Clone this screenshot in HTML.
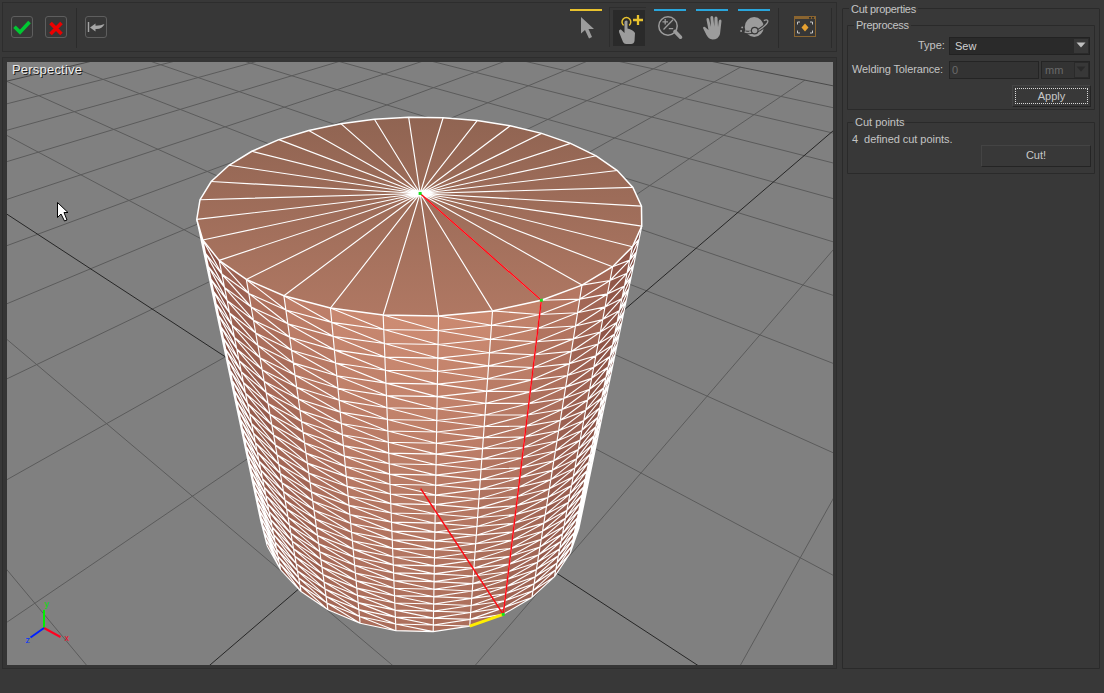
<!DOCTYPE html>
<html><head><meta charset="utf-8">
<style>
*{margin:0;padding:0;box-sizing:border-box}
html,body{width:1104px;height:693px;overflow:hidden;background:#383838;font-family:"Liberation Sans",sans-serif;}
.abs{position:absolute}
.panel{position:absolute;border:1px solid #2d2d2d;}
.t{position:absolute;color:#c4c4c4;font-size:11px;white-space:nowrap;line-height:13px;letter-spacing:0}
.btn{position:absolute;border:1px solid #5e5e5e;border-radius:3px}
</style></head><body>
<div class="panel" style="left:2px;top:2px;width:835px;height:50px;background:#373737"></div>
<div class="panel" style="left:2px;top:57px;width:835px;height:612px;background:#353535"></div>
<div class="btn" style="left:11px;top:16px;width:22px;height:22px"></div>
<div class="btn" style="left:45px;top:16px;width:22px;height:22px"></div>
<div class="btn" style="left:85px;top:16px;width:22px;height:22px"></div>
<div class="abs" style="left:76px;top:8px;width:1px;height:40px;background:#2b2b2b"></div>
<div class="abs" style="left:609px;top:7px;width:37px;height:1px;background:#2e2e2e"></div>
<div class="abs" style="left:609px;top:7px;width:1px;height:40px;background:#2e2e2e"></div>
<div class="abs" style="left:613px;top:10px;width:32px;height:36px;background:#2a2a2a"></div>
<div class="abs" style="left:778px;top:8px;width:1px;height:40px;background:#2b2b2b"></div>
<div class="abs" style="left:831px;top:8px;width:1px;height:40px;background:#2b2b2b"></div>
<div class="abs" style="left:570px;top:9px;width:32px;height:2px;background:#e8c22e"></div>
<div class="abs" style="left:654px;top:9px;width:32px;height:2px;background:#2aa6dc"></div>
<div class="abs" style="left:696px;top:9px;width:32px;height:2px;background:#2aa6dc"></div>
<div class="abs" style="left:738px;top:9px;width:32px;height:2px;background:#2aa6dc"></div>
<svg class="abs" style="left:0;top:0" width="1104" height="693" viewBox="0 0 1104 693">
<defs>
<clipPath id="vp"><rect x="7" y="62" width="826" height="603"/></clipPath>
<linearGradient id="topg" x1="0" y1="117" x2="0" y2="317" gradientUnits="userSpaceOnUse">
<stop offset="0" stop-color="#906452"/><stop offset="1" stop-color="#b07863"/>
</linearGradient>
</defs>
<rect x="7" y="62" width="826" height="603" fill="#808080"/>
<g clip-path="url(#vp)">
<defs><linearGradient id="sg10" gradientUnits="userSpaceOnUse" x1="637.09" y1="236.42" x2="574.53" y2="540.94"><stop offset="0" stop-color="#7d463c"/><stop offset="0.5" stop-color="#7c453b"/><stop offset="1" stop-color="#7a433a"/></linearGradient><linearGradient id="sg11" gradientUnits="userSpaceOnUse" x1="622.5" y1="256.73" x2="562.34" y2="564.92"><stop offset="0" stop-color="#915749"/><stop offset="0.5" stop-color="#8c5346"/><stop offset="1" stop-color="#884f43"/></linearGradient><linearGradient id="sg12" gradientUnits="userSpaceOnUse" x1="597.28" y1="275.92" x2="543.21" y2="587.03"><stop offset="0" stop-color="#a46856"/><stop offset="0.5" stop-color="#9b6051"/><stop offset="1" stop-color="#945a4c"/></linearGradient><linearGradient id="sg13" gradientUnits="userSpaceOnUse" x1="561.66" y1="292.66" x2="517.58" y2="605.9"><stop offset="0" stop-color="#b57762"/><stop offset="0.5" stop-color="#a86c5a"/><stop offset="1" stop-color="#9e6353"/></linearGradient><linearGradient id="sg14" gradientUnits="userSpaceOnUse" x1="516.94" y1="305.58" x2="486.48" y2="620.21"><stop offset="0" stop-color="#c2836b"/><stop offset="0.5" stop-color="#b27561"/><stop offset="1" stop-color="#a66a58"/></linearGradient><linearGradient id="sg15" gradientUnits="userSpaceOnUse" x1="465.54" y1="313.47" x2="451.46" y2="628.88"><stop offset="0" stop-color="#cb8a71"/><stop offset="0.5" stop-color="#b97a65"/><stop offset="1" stop-color="#ab6e5b"/></linearGradient><linearGradient id="sg16" gradientUnits="userSpaceOnUse" x1="410.85" y1="315.53" x2="414.56" y2="631.19"><stop offset="0" stop-color="#cd8c73"/><stop offset="0.5" stop-color="#ba7c66"/><stop offset="1" stop-color="#ac6f5c"/></linearGradient><linearGradient id="sg17" gradientUnits="userSpaceOnUse" x1="356.79" y1="311.56" x2="378.01" y2="626.95"><stop offset="0" stop-color="#c88870"/><stop offset="0.5" stop-color="#b77964"/><stop offset="1" stop-color="#aa6d5b"/></linearGradient><linearGradient id="sg18" gradientUnits="userSpaceOnUse" x1="307.16" y1="301.94" x2="344.02" y2="616.51"><stop offset="0" stop-color="#be7f69"/><stop offset="0.5" stop-color="#af725f"/><stop offset="1" stop-color="#a46857"/></linearGradient><linearGradient id="sg19" gradientUnits="userSpaceOnUse" x1="265.1" y1="287.63" x2="314.5" y2="600.7"><stop offset="0" stop-color="#af725e"/><stop offset="0.5" stop-color="#a46857"/><stop offset="1" stop-color="#9b6050"/></linearGradient><linearGradient id="sg20" gradientUnits="userSpaceOnUse" x1="232.72" y1="269.91" x2="290.85" y2="580.7"><stop offset="0" stop-color="#9d6252"/><stop offset="0.5" stop-color="#965c4d"/><stop offset="1" stop-color="#905649"/></linearGradient><linearGradient id="sg21" gradientUnits="userSpaceOnUse" x1="210.96" y1="250.16" x2="273.92" y2="557.86"><stop offset="0" stop-color="#8a5145"/><stop offset="0.5" stop-color="#864e42"/><stop offset="1" stop-color="#834b40"/></linearGradient><linearGradient id="sg22" gradientUnits="userSpaceOnUse" x1="199.77" y1="229.69" x2="263.99" y2="533.54"><stop offset="0" stop-color="#764037"/><stop offset="0.5" stop-color="#764037"/><stop offset="1" stop-color="#753f37"/></linearGradient></defs>
<path d="M25968.91,15684.53L2065.74,333.87M-26273.07,15517.67L-1824.31,512.1M21178,15669.23L1848.87,290.23M-20722.23,15535.4L-1457.93,425.88M16387.09,15653.93L1664.13,253.05M-15171.38,15553.13L-1170.13,358.15M11596.18,15638.63L1504.87,221M-9620.54,15570.86L-938.08,303.54M6805.26,15623.33L1366.16,193.09M-4069.7,15588.59L-747.01,258.57M2014.35,15608.02L1244.27,168.56M1481.14,15606.32L-586.96,220.9M-2776.56,15592.72L1136.3,146.83M7031.99,15624.05L-450.92,188.89M-7567.47,15577.42L1040.01,127.46M12582.83,15641.78L-333.88,161.34M-12358.39,15562.12L953.59,110.07M18133.67,15659.51L-232.12,137.39M-21940.21,15531.51L804.88,80.14M29235.36,15694.97L-63.83,97.79M-26731.12,15516.21L740.43,67.17M10594.6,4839.96L6.54,81.23M-31522.04,15500.91L681.47,55.31M6051.78,2393.44L69.62,66.38M-9816.26,4409.88L627.33,44.41M4475.82,1544.72L126.5,53M-5875.84,2424.22L577.43,34.37M3675.74,1113.84L178.04,40.87M-4303.85,1632.07L531.29,25.09M3191.75,853.19L224.97,29.82M-3458.37,1206.02L488.52,16.48M2867.43,678.53L267.87,19.73M-2930.3,939.91L448.74,8.47M2634.95,553.33L307.24,10.46M-2569.15,757.92L411.66,1.01M2460.15,459.19L343.5,1.92" stroke="#5b5b5b" stroke-width="1" fill="none"/>
<path d="M30759.83,15699.84L2323.92,385.82M-31823.91,15499.95L-2306.57,625.6M-2306.57,625.6L377.01,-5.96M2323.92,385.82L377.01,-5.96" stroke="#4a4a4a" stroke-width="1" fill="none"/>
<path d="M-17149.3,15546.82L875.61,94.37M23684.51,15677.24L-142.82,116.38" stroke="#1c1c1c" stroke-width="0.9" fill="none"/>
<polygon points="641.75,226.14 632.42,246.7 570.19,553.23 578.86,528.65" fill="url(#sg10)"/>
<polygon points="632.42,246.7 612.58,266.76 554.49,576.61 570.19,553.23" fill="url(#sg11)"/>
<polygon points="612.58,266.76 581.98,285.08 531.93,597.45 554.49,576.61" fill="url(#sg12)"/>
<polygon points="581.98,285.08 541.35,300.24 503.24,614.35 531.93,597.45" fill="url(#sg13)"/>
<polygon points="541.35,300.24 492.53,310.91 469.72,626.08 503.24,614.35" fill="url(#sg14)"/>
<polygon points="492.53,310.91 438.54,316.02 433.21,631.68 469.72,626.08" fill="url(#sg15)"/>
<polygon points="438.54,316.02 383.16,315.04 395.91,630.69 433.21,631.68" fill="url(#sg16)"/>
<polygon points="383.16,315.04 330.41,308.07 360.11,623.2 395.91,630.69" fill="url(#sg17)"/>
<polygon points="330.41,308.07 283.9,295.81 327.93,609.81 360.11,623.2" fill="url(#sg18)"/>
<polygon points="283.9,295.81 246.3,279.45 301.06,591.58 327.93,609.81" fill="url(#sg19)"/>
<polygon points="246.3,279.45 219.13,260.37 280.63,569.82 301.06,591.58" fill="url(#sg20)"/>
<polygon points="219.13,260.37 202.78,239.96 267.2,545.91 280.63,569.82" fill="url(#sg21)"/>
<polygon points="202.78,239.96 196.76,219.41 260.78,521.18 267.2,545.91" fill="url(#sg22)"/>
<path d="M641.75,226.14L578.86,528.65M632.42,246.7L570.19,553.23M612.58,266.76L554.49,576.61M581.98,285.08L531.93,597.45M541.35,300.24L503.24,614.35M492.53,310.91L469.72,626.08M438.54,316.02L433.21,631.68M383.16,315.04L395.91,630.69M330.41,308.07L360.11,623.2M283.9,295.81L327.93,609.81M246.3,279.45L301.06,591.58M219.13,260.37L280.63,569.82M202.78,239.96L267.2,545.91M196.76,219.41L260.78,521.18M639.03,239.23L629.69,260.13M632.42,246.7L639.03,239.23M636.38,251.99L627.04,273.21M629.69,260.13L636.38,251.99M633.79,264.44L624.45,285.97M627.04,273.21L633.79,264.44M631.26,276.6L621.92,298.41M624.45,285.97L631.26,276.6M628.79,288.47L619.46,310.54M621.92,298.41L628.79,288.47M626.38,300.07L617.06,322.37M619.46,310.54L626.38,300.07M624.03,311.39L614.71,333.92M617.06,322.37L624.03,311.39M621.73,322.46L612.42,345.2M614.71,333.92L621.73,322.46M619.48,333.28L610.19,356.21M612.42,345.2L619.48,333.28M617.28,343.86L608.01,366.96M610.19,356.21L617.28,343.86M615.13,354.2L605.87,377.47M608.01,366.96L615.13,354.2M613.02,364.32L603.79,387.74M605.87,377.47L613.02,364.32M610.97,374.22L601.75,397.78M603.79,387.74L610.97,374.22M608.95,383.91L599.76,407.6M601.75,397.78L608.95,383.91M606.98,393.39L597.81,417.2M599.76,407.6L606.98,393.39M605.05,402.68L595.9,426.59M597.81,417.2L605.05,402.68M603.16,411.77L594.04,435.78M595.9,426.59L603.16,411.77M601.31,420.68L592.21,444.77M594.04,435.78L601.31,420.68M599.49,429.41L590.42,453.58M592.21,444.77L599.49,429.41M597.71,437.96L588.67,462.2M590.42,453.58L597.71,437.96M595.97,446.35L586.96,470.65M588.67,462.2L595.97,446.35M594.26,454.56L585.28,478.92M586.96,470.65L594.26,454.56M592.59,462.62L583.63,487.02M585.28,478.92L592.59,462.62M590.95,470.52L582.02,494.97M583.63,487.02L590.95,470.52M589.33,478.27L580.44,502.75M582.02,494.97L589.33,478.27M587.75,485.88L578.89,510.39M580.44,502.75L587.75,485.88M586.2,493.34L577.37,517.87M578.89,510.39L586.2,493.34M584.68,500.67L575.88,525.22M577.37,517.87L584.68,500.67M583.18,507.85L574.42,532.42M575.88,525.22L583.18,507.85M581.72,514.91L572.98,539.49M574.42,532.42L581.72,514.91M580.28,521.84L571.57,546.42M572.98,539.49L580.28,521.84M578.86,528.65L570.19,553.23M571.57,546.42L578.86,528.65M629.69,260.13L610,280.51M612.58,266.76L629.69,260.13M627.04,273.21L607.5,293.89M610,280.51L627.04,273.21M624.45,285.97L605.05,306.92M607.5,293.89L624.45,285.97M621.92,298.41L602.68,319.6M605.05,306.92L621.92,298.41M619.46,310.54L600.36,331.97M602.68,319.6L619.46,310.54M617.06,322.37L598.1,344.01M600.36,331.97L617.06,322.37M614.71,333.92L595.9,355.76M598.1,344.01L614.71,333.92M612.42,345.2L593.75,367.22M595.9,355.76L612.42,345.2M610.19,356.21L591.65,378.39M593.75,367.22L610.19,356.21M608.01,366.96L589.61,389.3M591.65,378.39L608.01,366.96M605.87,377.47L587.61,399.94M589.61,389.3L605.87,377.47M603.79,387.74L585.66,410.34M587.61,399.94L603.79,387.74M601.75,397.78L583.76,420.49M585.66,410.34L601.75,397.78M599.76,407.6L581.9,430.41M583.76,420.49L599.76,407.6M597.81,417.2L580.08,440.11M581.9,430.41L597.81,417.2M595.9,426.59L578.31,449.58M580.08,440.11L595.9,426.59M594.04,435.78L576.57,458.85M578.31,449.58L594.04,435.78M592.21,444.77L574.87,467.91M576.57,458.85L592.21,444.77M590.42,453.58L573.21,476.77M574.87,467.91L590.42,453.58M588.67,462.2L571.58,485.44M573.21,476.77L588.67,462.2M586.96,470.65L569.99,493.93M571.58,485.44L586.96,470.65M585.28,478.92L568.43,502.24M569.99,493.93L585.28,478.92M583.63,487.02L566.91,510.37M568.43,502.24L583.63,487.02M582.02,494.97L565.42,518.34M566.91,510.37L582.02,494.97M580.44,502.75L563.95,526.15M565.42,518.34L580.44,502.75M578.89,510.39L562.52,533.79M563.95,526.15L578.89,510.39M577.37,517.87L561.11,541.29M562.52,533.79L577.37,517.87M575.88,525.22L559.74,548.63M561.11,541.29L575.88,525.22M574.42,532.42L558.39,555.83M559.74,548.63L574.42,532.42M572.98,539.49L557.06,562.89M558.39,555.83L572.98,539.49M571.57,546.42L555.76,569.82M557.06,562.89L571.57,546.42M570.19,553.23L554.49,576.61M555.76,569.82L570.19,553.23M610,280.51L579.74,299.09M581.98,285.08L610,280.51M607.5,293.89L577.56,312.72M579.74,299.09L607.5,293.89M605.05,306.92L575.43,325.98M577.56,312.72L605.05,306.92M602.68,319.6L573.36,338.87M575.43,325.98L602.68,319.6M600.36,331.97L571.35,351.42M573.36,338.87L600.36,331.97M598.1,344.01L569.39,363.65M571.35,351.42L598.1,344.01M595.9,355.76L567.49,375.55M569.39,363.65L595.9,355.76M593.75,367.22L565.63,387.16M567.49,375.55L593.75,367.22M591.65,378.39L563.82,398.46M565.63,387.16L591.65,378.39M589.61,389.3L562.05,409.49M563.82,398.46L589.61,389.3M587.61,399.94L560.33,420.25M562.05,409.49L587.61,399.94M585.66,410.34L558.64,430.74M560.33,420.25L585.66,410.34M583.76,420.49L557,440.98M558.64,430.74L583.76,420.49M581.9,430.41L555.4,450.98M557,440.98L581.9,430.41M580.08,440.11L553.84,460.74M555.4,450.98L580.08,440.11M578.31,449.58L552.31,470.27M553.84,460.74L578.31,449.58M576.57,458.85L550.82,479.59M552.31,470.27L576.57,458.85M574.87,467.91L549.36,488.69M550.82,479.59L574.87,467.91M573.21,476.77L547.93,497.6M549.36,488.69L573.21,476.77M571.58,485.44L546.54,506.3M547.93,497.6L571.58,485.44M569.99,493.93L545.17,514.81M546.54,506.3L569.99,493.93M568.43,502.24L543.84,523.14M545.17,514.81L568.43,502.24M566.91,510.37L542.53,531.29M543.84,523.14L566.91,510.37M565.42,518.34L541.25,539.26M542.53,531.29L565.42,518.34M563.95,526.15L540,547.07M541.25,539.26L563.95,526.15M562.52,533.79L538.78,554.72M540,547.07L562.52,533.79M561.11,541.29L537.58,562.21M538.78,554.72L561.11,541.29M559.74,548.63L536.4,569.54M537.58,562.21L559.74,548.63M558.39,555.83L535.25,576.73M536.4,569.54L558.39,555.83M557.06,562.89L534.12,583.77M535.25,576.73L557.06,562.89M555.76,569.82L533.02,590.68M534.12,583.77L555.76,569.82M554.49,576.61L531.93,597.45M533.02,590.68L554.49,576.61M579.74,299.09L539.62,314.47M541.35,300.24L579.74,299.09M577.56,312.72L537.94,328.28M539.62,314.47L577.56,312.72M575.43,325.98L536.31,341.71M537.94,328.28L575.43,325.98M573.36,338.87L534.73,354.77M536.31,341.71L573.36,338.87M571.35,351.42L533.19,367.47M534.73,354.77L571.35,351.42M569.39,363.65L531.69,379.82M533.19,367.47L569.39,363.65M567.49,375.55L530.23,391.85M531.69,379.82L567.49,375.55M565.63,387.16L528.81,403.56M530.23,391.85L565.63,387.16M563.82,398.46L527.43,414.96M528.81,403.56L563.82,398.46M562.05,409.49L526.08,426.08M527.43,414.96L562.05,409.49M560.33,420.25L524.76,436.91M526.08,426.08L560.33,420.25M558.64,430.74L523.48,447.47M524.76,436.91L558.64,430.74M557,440.98L522.23,457.77M523.48,447.47L557,440.98M555.4,450.98L521.01,467.82M522.23,457.77L555.4,450.98M553.84,460.74L519.82,477.63M521.01,467.82L553.84,460.74M552.31,470.27L518.66,487.2M519.82,477.63L552.31,470.27M550.82,479.59L517.53,496.55M518.66,487.2L550.82,479.59M549.36,488.69L516.42,505.68M517.53,496.55L549.36,488.69M547.93,497.6L515.34,514.6M516.42,505.68L547.93,497.6M546.54,506.3L514.28,523.32M515.34,514.6L546.54,506.3M545.17,514.81L513.25,531.85M514.28,523.32L545.17,514.81M543.84,523.14L512.23,540.18M513.25,531.85L543.84,523.14M542.53,531.29L511.25,548.33M512.23,540.18L542.53,531.29M541.25,539.26L510.28,556.3M511.25,548.33L541.25,539.26M540,547.07L509.33,564.11M510.28,556.3L540,547.07M538.78,554.72L508.41,571.74M509.33,564.11L538.78,554.72M537.58,562.21L507.5,579.22M508.41,571.74L537.58,562.21M536.4,569.54L506.61,586.54M507.5,579.22L536.4,569.54M535.25,576.73L505.74,593.71M506.61,586.54L535.25,576.73M534.12,583.77L504.89,600.73M505.74,593.71L534.12,583.77M533.02,590.68L504.05,607.61M504.89,600.73L533.02,590.68M531.93,597.45L503.24,614.35M504.05,607.61L531.93,597.45M539.62,314.47L491.49,325.27M492.53,310.91L539.62,314.47M537.94,328.28L490.48,339.22M491.49,325.27L537.94,328.28M536.31,341.71L489.5,352.76M490.48,339.22L536.31,341.71M534.73,354.77L488.55,365.93M489.5,352.76L534.73,354.77M533.19,367.47L487.62,378.72M488.55,365.93L533.19,367.47M531.69,379.82L486.72,391.16M487.62,378.72L531.69,379.82M530.23,391.85L485.85,403.27M486.72,391.16L530.23,391.85M528.81,403.56L484.99,415.04M485.85,403.27L528.81,403.56M527.43,414.96L484.16,426.51M484.99,415.04L527.43,414.96M526.08,426.08L483.36,437.68M484.16,426.51L526.08,426.08M524.76,436.91L482.57,448.56M483.36,437.68L524.76,436.91M523.48,447.47L481.8,459.16M482.57,448.56L523.48,447.47M522.23,457.77L481.05,469.5M481.8,459.16L522.23,457.77M521.01,467.82L480.32,479.58M481.05,469.5L521.01,467.82M519.82,477.63L479.61,489.42M480.32,479.58L519.82,477.63M518.66,487.2L478.91,499.01M479.61,489.42L518.66,487.2M517.53,496.55L478.24,508.38M478.91,499.01L517.53,496.55M516.42,505.68L477.57,517.52M478.24,508.38L516.42,505.68M515.34,514.6L476.93,526.45M477.57,517.52L515.34,514.6M514.28,523.32L476.3,535.18M476.93,526.45L514.28,523.32M513.25,531.85L475.68,543.7M476.3,535.18L513.25,531.85M512.23,540.18L475.08,552.04M475.68,543.7L512.23,540.18M511.25,548.33L474.49,560.19M475.08,552.04L511.25,548.33M510.28,556.3L473.91,568.15M474.49,560.19L510.28,556.3M509.33,564.11L473.34,575.95M473.91,568.15L509.33,564.11M508.41,571.74L472.79,583.57M473.34,575.95L508.41,571.74M507.5,579.22L472.25,591.03M472.79,583.57L507.5,579.22M506.61,586.54L471.72,598.34M472.25,591.03L506.61,586.54M505.74,593.71L471.21,605.49M471.72,598.34L505.74,593.71M504.89,600.73L470.7,612.49M471.21,605.49L504.89,600.73M504.05,607.61L470.2,619.35M470.7,612.49L504.05,607.61M503.24,614.35L469.72,626.08M470.2,619.35L503.24,614.35M491.49,325.27L438.3,330.45M438.54,316.02L491.49,325.27M490.48,339.22L438.06,344.46M438.3,330.45L490.48,339.22M489.5,352.76L437.83,358.06M438.06,344.46L489.5,352.76M488.55,365.93L437.61,371.28M437.83,358.06L488.55,365.93M487.62,378.72L437.39,384.12M437.61,371.28L487.62,378.72M486.72,391.16L437.18,396.6M437.39,384.12L486.72,391.16M485.85,403.27L436.98,408.74M437.18,396.6L485.85,403.27M484.99,415.04L436.78,420.55M436.98,408.74L484.99,415.04M484.16,426.51L436.58,432.05M436.78,420.55L484.16,426.51M483.36,437.68L436.39,443.24M436.58,432.05L483.36,437.68M482.57,448.56L436.21,454.15M436.39,443.24L482.57,448.56M481.8,459.16L436.03,464.77M436.21,454.15L481.8,459.16M481.05,469.5L435.85,475.12M436.03,464.77L481.05,469.5M480.32,479.58L435.68,485.22M435.85,475.12L480.32,479.58M479.61,489.42L435.52,495.06M435.68,485.22L479.61,489.42M478.91,499.01L435.36,504.67M435.52,495.06L478.91,499.01M478.24,508.38L435.2,514.04M435.36,504.67L478.24,508.38M477.57,517.52L435.04,523.19M435.2,514.04L477.57,517.52M476.93,526.45L434.89,532.13M435.04,523.19L476.93,526.45M476.3,535.18L434.74,540.86M434.89,532.13L476.3,535.18M475.68,543.7L434.6,549.38M434.74,540.86L475.68,543.7M475.08,552.04L434.46,557.71M434.6,549.38L475.08,552.04M474.49,560.19L434.32,565.86M434.46,557.71L474.49,560.19M473.91,568.15L434.19,573.82M434.32,565.86L473.91,568.15M473.34,575.95L434.05,581.61M434.19,573.82L473.34,575.95M472.79,583.57L433.93,589.23M434.05,581.61L472.79,583.57M472.25,591.03L433.8,596.69M433.93,589.23L472.25,591.03M471.72,598.34L433.68,603.98M433.8,596.69L471.72,598.34M471.21,605.49L433.56,611.13M433.68,603.98L471.21,605.49M470.7,612.49L433.44,618.12M433.56,611.13L470.7,612.49M470.2,619.35L433.32,624.97M433.44,618.12L470.2,619.35M469.72,626.08L433.21,631.68M433.32,624.97L469.72,626.08M438.3,330.45L383.75,329.47M383.16,315.04L438.3,330.45M438.06,344.46L384.31,343.47M383.75,329.47L438.06,344.46M437.83,358.06L384.86,357.06M384.31,343.47L437.83,358.06M437.61,371.28L385.39,370.27M384.86,357.06L437.61,371.28M437.39,384.12L385.91,383.11M385.39,370.27L437.39,384.12M437.18,396.6L386.42,395.59M385.91,383.11L437.18,396.6M436.98,408.74L386.91,407.72M386.42,395.59L436.98,408.74M436.78,420.55L387.38,419.53M386.91,407.72L436.78,420.55M436.58,432.05L387.85,431.03M387.38,419.53L436.58,432.05M436.39,443.24L388.3,442.22M387.85,431.03L436.39,443.24M436.21,454.15L388.74,453.12M388.3,442.22L436.21,454.15M436.03,464.77L389.17,463.75M388.74,453.12L436.03,464.77M435.85,475.12L389.59,474.1M389.17,463.75L435.85,475.12M435.68,485.22L389.99,484.2M389.59,474.1L435.68,485.22M435.52,495.06L390.39,494.04M389.99,484.2L435.52,495.06M435.36,504.67L390.78,503.65M390.39,494.04L435.36,504.67M435.2,514.04L391.16,513.02M390.78,503.65L435.2,514.04M435.04,523.19L391.53,522.17M391.16,513.02L435.04,523.19M434.89,532.13L391.89,531.11M391.53,522.17L434.89,532.13M434.74,540.86L392.24,539.84M391.89,531.11L434.74,540.86M434.6,549.38L392.59,548.37M392.24,539.84L434.6,549.38M434.46,557.71L392.92,556.7M392.59,548.37L434.46,557.71M434.32,565.86L393.25,564.85M392.92,556.7L434.32,565.86M434.19,573.82L393.57,572.82M393.25,564.85L434.19,573.82M434.05,581.61L393.89,580.61M393.57,572.82L434.05,581.61M433.93,589.23L394.2,588.23M393.89,580.61L433.93,589.23M433.8,596.69L394.5,595.69M394.2,588.23L433.8,596.69M433.68,603.98L394.79,602.99M394.5,595.69L433.68,603.98M433.56,611.13L395.08,610.13M394.79,602.99L433.56,611.13M433.44,618.12L395.36,617.13M395.08,610.13L433.44,618.12M433.32,624.97L395.64,623.98M395.36,617.13L433.32,624.97M433.21,631.68L395.91,630.69M395.64,623.98L433.21,631.68M383.75,329.47L331.77,322.41M330.41,308.07L383.75,329.47M384.31,343.47L333.08,336.34M331.77,322.41L384.31,343.47M384.86,357.06L334.35,349.87M333.08,336.34L384.86,357.06M385.39,370.27L335.59,363.01M334.35,349.87L385.39,370.27M385.91,383.11L336.8,375.8M335.59,363.01L385.91,383.11M386.42,395.59L337.97,388.23M336.8,375.8L386.42,395.59M386.91,407.72L339.11,400.32M337.97,388.23L386.91,407.72M387.38,419.53L340.22,412.09M339.11,400.32L387.38,419.53M387.85,431.03L341.3,423.55M340.22,412.09L387.85,431.03M388.3,442.22L342.35,434.72M341.3,423.55L388.3,442.22M388.74,453.12L343.38,445.59M342.35,434.72L388.74,453.12M389.17,463.75L344.37,456.19M343.38,445.59L389.17,463.75M389.59,474.1L345.35,466.53M344.37,456.19L389.59,474.1M389.99,484.2L346.3,476.61M345.35,466.53L389.99,484.2M390.39,494.04L347.23,486.44M346.3,476.61L390.39,494.04M390.78,503.65L348.13,496.04M347.23,486.44L390.78,503.65M391.16,513.02L349.01,505.41M348.13,496.04L391.16,513.02M391.53,522.17L349.87,514.56M349.01,505.41L391.53,522.17M391.89,531.11L350.72,523.49M349.87,514.56L391.89,531.11M392.24,539.84L351.54,532.22M350.72,523.49L392.24,539.84M392.59,548.37L352.34,540.75M351.54,532.22L392.59,548.37M392.92,556.7L353.13,549.09M352.34,540.75L392.92,556.7M393.25,564.85L353.9,557.24M353.13,549.09L393.25,564.85M393.57,572.82L354.65,565.22M353.9,557.24L393.57,572.82M393.89,580.61L355.38,573.02M354.65,565.22L393.89,580.61M394.2,588.23L356.1,580.65M355.38,573.02L394.2,588.23M394.5,595.69L356.81,588.12M356.1,580.65L394.5,595.69M394.79,602.99L357.5,595.43M356.81,588.12L394.79,602.99M395.08,610.13L358.17,602.59M357.5,595.43L395.08,610.13M395.36,617.13L358.83,609.6M358.17,602.59L395.36,617.13M395.64,623.98L359.48,616.47M358.83,609.6L395.64,623.98M395.91,630.69L360.11,623.2M359.48,616.47L395.91,630.69M331.77,322.41L285.89,310M283.9,295.81L331.77,322.41M333.08,336.34L287.82,323.79M285.89,310L333.08,336.34M334.35,349.87L289.7,337.19M287.82,323.79L334.35,349.87M335.59,363.01L291.53,350.22M289.7,337.19L335.59,363.01M336.8,375.8L293.31,362.9M291.53,350.22L336.8,375.8M337.97,388.23L295.04,375.23M293.31,362.9L337.97,388.23M339.11,400.32L296.72,387.24M295.04,375.23L339.11,400.32M340.22,412.09L298.36,398.94M296.72,387.24L340.22,412.09M341.3,423.55L299.96,410.33M298.36,398.94L341.3,423.55M342.35,434.72L301.52,421.43M299.96,410.33L342.35,434.72M343.38,445.59L303.03,432.26M301.52,421.43L343.38,445.59M344.37,456.19L304.51,442.81M303.03,432.26L344.37,456.19M345.35,466.53L305.96,453.11M304.51,442.81L345.35,466.53M346.3,476.61L307.37,463.16M305.96,453.11L346.3,476.61M347.23,486.44L308.74,472.96M307.37,463.16L347.23,486.44M348.13,496.04L310.08,482.54M308.74,472.96L348.13,496.04M349.01,505.41L311.4,491.89M310.08,482.54L349.01,505.41M349.87,514.56L312.68,501.02M311.4,491.89L349.87,514.56M350.72,523.49L313.93,509.95M312.68,501.02L350.72,523.49M351.54,532.22L315.15,518.67M313.93,509.95L351.54,532.22M352.34,540.75L316.35,527.2M315.15,518.67L352.34,540.75M353.13,549.09L317.52,535.54M316.35,527.2L353.13,549.09M353.9,557.24L318.66,543.7M317.52,535.54L353.9,557.24M354.65,565.22L319.78,551.68M318.66,543.7L354.65,565.22M355.38,573.02L320.88,559.49M319.78,551.68L355.38,573.02M356.1,580.65L321.95,567.13M320.88,559.49L356.1,580.65M356.81,588.12L323,574.62M321.95,567.13L356.81,588.12M357.5,595.43L324.03,581.95M323,574.62L357.5,595.43M358.17,602.59L325.03,589.13M324.03,581.95L358.17,602.59M358.83,609.6L326.02,596.17M325.03,589.13L358.83,609.6M359.48,616.47L326.99,603.06M326.02,596.17L359.48,616.47M360.11,623.2L327.93,609.81M326.99,603.06L360.11,623.2M285.89,310L248.75,293.42M246.3,279.45L285.89,310M287.82,323.79L251.13,307M248.75,293.42L287.82,323.79M289.7,337.19L253.45,320.21M251.13,307L289.7,337.19M291.53,350.22L255.71,333.07M253.45,320.21L291.53,350.22M293.31,362.9L257.9,345.6M255.71,333.07L293.31,362.9M295.04,375.23L260.04,357.79M257.9,345.6L295.04,375.23M296.72,387.24L262.13,369.67M260.04,357.79L296.72,387.24M298.36,398.94L264.16,381.25M262.13,369.67L298.36,398.94M299.96,410.33L266.14,392.54M264.16,381.25L299.96,410.33M301.52,421.43L268.07,403.55M266.14,392.54L301.52,421.43M303.03,432.26L269.96,414.29M268.07,403.55L303.03,432.26M304.51,442.81L271.8,424.77M269.96,414.29L304.51,442.81M305.96,453.11L273.59,435.01M271.8,424.77L305.96,453.11M307.37,463.16L275.34,445M273.59,435.01L307.37,463.16M308.74,472.96L277.06,454.75M275.34,445L308.74,472.96M310.08,482.54L278.73,464.29M277.06,454.75L310.08,482.54M311.4,491.89L280.36,473.6M278.73,464.29L311.4,491.89M312.68,501.02L281.96,482.71M280.36,473.6L312.68,501.02M313.93,509.95L283.52,491.61M281.96,482.71L313.93,509.95M315.15,518.67L285.05,500.32M283.52,491.61L315.15,518.67M316.35,527.2L286.54,508.83M285.05,500.32L316.35,527.2M317.52,535.54L288.01,517.17M286.54,508.83L317.52,535.54M318.66,543.7L289.44,525.32M288.01,517.17L318.66,543.7M319.78,551.68L290.84,533.31M289.44,525.32L319.78,551.68M320.88,559.49L292.21,541.12M290.84,533.31L320.88,559.49M321.95,567.13L293.55,548.78M292.21,541.12L321.95,567.13M323,574.62L294.87,556.28M293.55,548.78L323,574.62M324.03,581.95L296.16,563.62M294.87,556.28L324.03,581.95M325.03,589.13L297.42,570.82M296.16,563.62L325.03,589.13M326.02,596.17L298.66,577.88M297.42,570.82L326.02,596.17M326.99,603.06L299.87,584.8M298.66,577.88L326.99,603.06M327.93,609.81L301.06,591.58M299.87,584.8L327.93,609.81M248.75,293.42L221.85,274.06M219.13,260.37L248.75,293.42M251.13,307L224.5,287.38M221.85,274.06L251.13,307M253.45,320.21L227.08,300.36M224.5,287.38L253.45,320.21M255.71,333.07L229.59,313M227.08,300.36L255.71,333.07M257.9,345.6L232.04,325.32M229.59,313L257.9,345.6M260.04,357.79L234.43,337.33M232.04,325.32L260.04,357.79M262.13,369.67L236.75,349.04M234.43,337.33L262.13,369.67M264.16,381.25L239.02,360.47M236.75,349.04L264.16,381.25M266.14,392.54L241.24,371.62M239.02,360.47L266.14,392.54M268.07,403.55L243.4,382.5M241.24,371.62L268.07,403.55M269.96,414.29L245.52,393.13M243.4,382.5L269.96,414.29M271.8,424.77L247.58,403.51M245.52,393.13L271.8,424.77M273.59,435.01L249.59,413.64M247.58,403.51L273.59,435.01M275.34,445L251.56,423.55M249.59,413.64L275.34,445M277.06,454.75L253.49,433.24M251.56,423.55L277.06,454.75M278.73,464.29L255.37,442.7M253.49,433.24L278.73,464.29M280.36,473.6L257.21,451.96M255.37,442.7L280.36,473.6M281.96,482.71L259.01,461.02M257.21,451.96L281.96,482.71M283.52,491.61L260.77,469.88M259.01,461.02L283.52,491.61M285.05,500.32L262.5,478.55M260.77,469.88L285.05,500.32M286.54,508.83L264.18,487.04M262.5,478.55L286.54,508.83M288.01,517.17L265.83,495.35M264.18,487.04L288.01,517.17M289.44,525.32L267.45,503.49M265.83,495.35L289.44,525.32M290.84,533.31L269.04,511.47M267.45,503.49L290.84,533.31M292.21,541.12L270.59,519.28M269.04,511.47L292.21,541.12M293.55,548.78L272.11,526.93M270.59,519.28L293.55,548.78M294.87,556.28L273.6,534.43M272.11,526.93L294.87,556.28M296.16,563.62L275.06,541.79M273.6,534.43L296.16,563.62M297.42,570.82L276.5,549M275.06,541.79L297.42,570.82M298.66,577.88L277.9,556.07M276.5,549L298.66,577.88M299.87,584.8L279.28,563.01M277.9,556.07L299.87,584.8M301.06,591.58L280.63,569.82M279.28,563.01L301.06,591.58M221.85,274.06L205.59,253.32M202.78,239.96L221.85,274.06M224.5,287.38L208.34,266.34M205.59,253.32L224.5,287.38M227.08,300.36L211.01,279.04M208.34,266.34L227.08,300.36M229.59,313L213.62,291.42M211.01,279.04L229.59,313M232.04,325.32L216.16,303.5M213.62,291.42L232.04,325.32M234.43,337.33L218.64,315.29M216.16,303.5L234.43,337.33M236.75,349.04L221.07,326.8M218.64,315.29L236.75,349.04M239.02,360.47L223.43,338.04M221.07,326.8L239.02,360.47M241.24,371.62L225.74,349.02M223.43,338.04L241.24,371.62M243.4,382.5L228,359.74M225.74,349.02L243.4,382.5M245.52,393.13L230.21,370.22M228,359.74L245.52,393.13M247.58,403.51L232.37,380.47M230.21,370.22L247.58,403.51M249.59,413.64L234.48,390.49M232.37,380.47L249.59,413.64M251.56,423.55L236.54,400.29M234.48,390.49L251.56,423.55M253.49,433.24L238.56,409.87M236.54,400.29L253.49,433.24M255.37,442.7L240.53,419.25M238.56,409.87L255.37,442.7M257.21,451.96L242.46,428.43M240.53,419.25L257.21,451.96M259.01,461.02L244.36,437.41M242.46,428.43L259.01,461.02M260.77,469.88L246.21,446.21M244.36,437.41L260.77,469.88M262.5,478.55L248.02,454.83M246.21,446.21L262.5,478.55M264.18,487.04L249.8,463.27M248.02,454.83L264.18,487.04M265.83,495.35L251.54,471.54M249.8,463.27L265.83,495.35M267.45,503.49L253.25,479.65M251.54,471.54L267.45,503.49M269.04,511.47L254.92,487.59M253.25,479.65L269.04,511.47M270.59,519.28L256.56,495.38M254.92,487.59L270.59,519.28M272.11,526.93L258.17,503.02M256.56,495.38L272.11,526.93M273.6,534.43L259.75,510.51M258.17,503.02L273.6,534.43M275.06,541.79L261.29,517.86M259.75,510.51L275.06,541.79M276.5,549L262.81,525.07M261.29,517.86L276.5,549M277.9,556.07L264.3,532.15M262.81,525.07L277.9,556.07M279.28,563.01L265.76,539.09M264.3,532.15L279.28,563.01M280.63,569.82L267.2,545.91M265.76,539.09L280.63,569.82M205.59,253.32L199.52,232.42M196.76,219.41L205.59,253.32M208.34,266.34L202.22,245.12M199.52,232.42L208.34,266.34M211.01,279.04L204.84,257.51M202.22,245.12L211.01,279.04M213.62,291.42L207.41,269.61M204.84,257.51L213.62,291.42M216.16,303.5L209.92,281.42M207.41,269.61L216.16,303.5M218.64,315.29L212.37,292.96M209.92,281.42L218.64,315.29M221.07,326.8L214.76,304.24M212.37,292.96L221.07,326.8M223.43,338.04L217.1,315.27M214.76,304.24L223.43,338.04M225.74,349.02L219.38,326.05M217.1,315.27L225.74,349.02M228,359.74L221.62,336.59M219.38,326.05L228,359.74M230.21,370.22L223.81,346.9M221.62,336.59L230.21,370.22M232.37,380.47L225.95,356.99M223.81,346.9L232.37,380.47M234.48,390.49L228.04,366.87M225.95,356.99L234.48,390.49M236.54,400.29L230.09,376.53M228.04,366.87L236.54,400.29M238.56,409.87L232.1,386M230.09,376.53L238.56,409.87M240.53,419.25L234.07,395.26M232.1,386L240.53,419.25M242.46,428.43L235.99,404.34M234.07,395.26L242.46,428.43M244.36,437.41L237.88,413.24M235.99,404.34L244.36,437.41M246.21,446.21L239.73,421.95M237.88,413.24L246.21,446.21M248.02,454.83L241.54,430.5M239.73,421.95L248.02,454.83M249.8,463.27L243.32,438.87M241.54,430.5L249.8,463.27M251.54,471.54L245.06,447.08M243.32,438.87L251.54,471.54M253.25,479.65L246.77,455.14M245.06,447.08L253.25,479.65M254.92,487.59L248.45,463.03M246.77,455.14L254.92,487.59M256.56,495.38L250.09,470.78M248.45,463.03L256.56,495.38M258.17,503.02L251.7,478.39M250.09,470.78L258.17,503.02M259.75,510.51L253.29,485.85M251.7,478.39L259.75,510.51M261.29,517.86L254.84,493.18M253.29,485.85L261.29,517.86M262.81,525.07L256.37,500.37M254.84,493.18L262.81,525.07M264.3,532.15L257.86,507.43M256.37,500.37L264.3,532.15M265.76,539.09L259.34,514.37M257.86,507.43L265.76,539.09M267.2,545.91L260.78,521.18M259.34,514.37L267.2,545.91" stroke="#ffffff" stroke-width="1.15" fill="none"/>
<polygon points="408.67,117.33 443.12,117.75 477.17,120.55 510.22,125.75 541.59,133.36 570.51,143.38 596.1,155.8 617.29,170.54 632.86,187.42 641.47,206.13 641.75,226.14 632.42,246.7 612.58,266.76 581.98,285.08 541.35,300.24 492.53,310.91 438.54,316.02 383.16,315.04 330.41,308.07 283.9,295.81 246.3,279.45 219.13,260.37 202.78,239.96 196.76,219.41 200.02,199.7 211.2,181.5 228.92,165.26 251.84,151.26 278.8,139.63 308.76,130.43 340.87,123.65 374.39,119.29" fill="url(#topg)"/>
<path d="M420.12,193.46L408.67,117.33M420.12,193.46L443.12,117.75M420.12,193.46L477.17,120.55M420.12,193.46L510.22,125.75M420.12,193.46L541.59,133.36M420.12,193.46L570.51,143.38M420.12,193.46L596.1,155.8M420.12,193.46L617.29,170.54M420.12,193.46L632.86,187.42M420.12,193.46L641.47,206.13M420.12,193.46L641.75,226.14M420.12,193.46L632.42,246.7M420.12,193.46L612.58,266.76M420.12,193.46L581.98,285.08M420.12,193.46L541.35,300.24M420.12,193.46L492.53,310.91M420.12,193.46L438.54,316.02M420.12,193.46L383.16,315.04M420.12,193.46L330.41,308.07M420.12,193.46L283.9,295.81M420.12,193.46L246.3,279.45M420.12,193.46L219.13,260.37M420.12,193.46L202.78,239.96M420.12,193.46L196.76,219.41M420.12,193.46L200.02,199.7M420.12,193.46L211.2,181.5M420.12,193.46L228.92,165.26M420.12,193.46L251.84,151.26M420.12,193.46L278.8,139.63M420.12,193.46L308.76,130.43M420.12,193.46L340.87,123.65M420.12,193.46L374.39,119.29" stroke="#ffffff" stroke-width="1.15" fill="none"/>
<path d="M408.67,117.33L443.12,117.75L477.17,120.55L510.22,125.75L541.59,133.36L570.51,143.38L596.1,155.8L617.29,170.54L632.86,187.42L641.47,206.13L641.75,226.14L632.42,246.7L612.58,266.76L581.98,285.08L541.35,300.24L492.53,310.91L438.54,316.02L383.16,315.04L330.41,308.07L283.9,295.81L246.3,279.45L219.13,260.37L202.78,239.96L196.76,219.41L200.02,199.7L211.2,181.5L228.92,165.26L251.84,151.26L278.8,139.63L308.76,130.43L340.87,123.65L374.39,119.29Z" stroke="#ffffff" stroke-width="1.5" fill="none"/>
<path d="M420.12,193.46L541.35,300.24L503.24,614.35L420.68,488.57" stroke="#ff0a14" stroke-width="1.5" fill="none" stroke-linejoin="round"/>
<path d="M503.24,614.35L469.72,626.08" stroke="#ffee00" stroke-width="3" fill="none"/>
<rect x="418.62" y="191.96" width="3" height="3" fill="#18e020"/>
<rect x="539.85" y="298.74" width="3" height="3" fill="#18e020"/>
<rect x="501.74" y="612.85" width="3" height="3" fill="#18e020"/>
</g>

<!-- toolbar icons -->
<path d="M14.5,26.8 L20,32.2 L29.5,22" stroke="#00c832" stroke-width="3.6" fill="none" stroke-linejoin="miter" stroke-linecap="butt"/>
<path d="M50.5,23 L61.5,34 M61.5,23 L50.5,34" stroke="#ec0000" stroke-width="3.6" fill="none"/>
<path d="M88.5,22 V32" stroke="#a6a6a6" stroke-width="1.4"/>
<path d="M90,27.5 L95.5,23.5 L95.5,25.8 Q101,25.5 104.5,24 Q102,29.5 95.5,29 L95.5,31.5 Z" fill="#a6a6a6"/>
<!-- arrow cursor icon -->
<path d="M581,17 L581,33.5 L585,30 L589,38.5 L592,37 L588.5,29 L594,29 Z" fill="#9c9c9c"/>
<!-- hand plus -->
<path d="M623.6,25.3 A4.4,4.4 0 1 1 629.2,25.3" stroke="#e8c22e" stroke-width="1.5" fill="none"/>
<path d="M633,20 H643 M638,15 V25" stroke="#e8c22e" stroke-width="2.3"/>
<path d="M625,21 Q626.5,20 627.5,21 L627.5,28.5 Q633,29.5 635,33 L634.5,41 Q634,44 631,44 L626,44 Q624,44 623,42 L619,32 Q618.5,29 621,29.5 L624.5,33 L624.5,22 Z" fill="#9c9c9c"/>
<!-- zoom -->
<circle cx="668" cy="26" r="9.2" stroke="#9c9c9c" stroke-width="1.5" fill="none"/>
<path d="M675,31.5 L680.5,37.2" stroke="#9c9c9c" stroke-width="3.6" stroke-linecap="round"/>
<path d="M663.5,29.5 L673,19.8 M662.5,21.8 H668 M665.2,19 V24.6 M668.8,28.6 H673.2" stroke="#9c9c9c" stroke-width="1.3"/>
<!-- hand -->
<path d="M705,27 Q703.5,26 703,28 L706.5,35 Q708.5,39 712.5,39.5 Q718.5,39.5 720,34 L721.5,21 Q721.5,19.5 720.3,19.5 Q719,19.5 718.8,21 L718,27 L717.5,18 Q717.3,16.5 716,16.5 Q714.6,16.5 714.5,18 L714.3,26.5 L713.2,17.3 Q713,16 711.7,16 Q710.4,16 710.4,17.5 L711,27 L709,19 Q708.6,17.8 707.5,18 Q706.2,18.3 706.5,19.8 L708.5,30 Z" fill="#9c9c9c"/>
<!-- orbit -->
<ellipse cx="754.2" cy="27" rx="9.5" ry="10" fill="#9c9c9c"/>
<path d="M746,32.3 Q755,33.5 762,28 Q768.5,23 767.8,20.8 Q767,19.2 763.8,20.6" stroke="#373737" stroke-width="3.4" fill="none"/>
<path d="M746,32.3 Q755,33.5 762,28 Q768.5,23 767.8,20.8 Q767,19.2 763.8,20.6" stroke="#9c9c9c" stroke-width="1.3" fill="none"/>
<circle cx="754.7" cy="30.6" r="3.9" fill="#373737"/>
<circle cx="754.7" cy="30.6" r="2.7" fill="#9c9c9c"/>
<circle cx="742.2" cy="27.4" r="0.95" fill="#9c9c9c"/><circle cx="741.1" cy="31" r="0.95" fill="#9c9c9c"/><circle cx="745.4" cy="32.1" r="0.95" fill="#9c9c9c"/><circle cx="750" cy="31.9" r="0.95" fill="#9c9c9c"/>
<!-- frame icon -->
<rect x="794.5" y="16.5" width="21" height="20" fill="none" stroke="#8a6530" stroke-width="1"/>
<rect x="794.5" y="16.5" width="21" height="2.5" fill="#8a6530"/>
<rect x="809" y="17" width="2" height="1.6" fill="#2d2d2d"/><rect x="812" y="17" width="2" height="1.6" fill="#2d2d2d"/>
<path d="M797.5,24.5 V22 H800 M810,22 H812.5 V24.5 M797.5,30.5 V33 H800 M810,33 H812.5 V30.5" stroke="#c8c8c8" stroke-width="1" fill="none"/>
<path d="M805,23.5 L808.5,27.5 L805,31.5 L801.5,27.5 Z" fill="#e5a030"/>
<!-- gizmo -->
<path d="M44,628 V610" stroke="#00f000" stroke-width="2"/>
<path d="M44,628 L60.5,637" stroke="#ff0020" stroke-width="2"/>
<path d="M44,628 L30.5,637.5" stroke="#0020ff" stroke-width="2"/>
<text x="44.5" y="607" font-size="9" fill="#00e000" font-family="Liberation Sans">y</text>
<text x="64.5" y="640.5" font-size="9" fill="#f00020" font-family="Liberation Sans">x</text>
<text x="25.5" y="643" font-size="9" fill="#0030ff" font-family="Liberation Sans">z</text>
<!-- cursor -->
<path d="M57.5,202.5 L57.5,217.5 L61,214 L64.5,221 L67,220 L64,212.5 L68,212.5 Z" fill="#fff" stroke="#000" stroke-width="1"/>
<!-- right panel lines -->
<path d="M842.5,9 V668.5 H1099.5 V9 M847.5,25.5 V109.5 H1094.5 V25.5 M847.5,122.5 V173.5 H1094.5 V122.5" stroke="#2a2a2a" stroke-width="1" fill="none"/>
<path d="M842.5,8.5 H849 M918,8.5 H1099.5 M847.5,25.5 H854 M911,25.5 H1094.5 M847.5,122.5 H853 M905,122.5 H1094.5" stroke="#2a2a2a" stroke-width="1" fill="none"/>
</svg>
<div class="t" style="left:12px;top:63px;font-size:13px;letter-spacing:0.2px;color:#ececec;text-shadow:1px 1px 0 #1a1a1a;font-family:'Liberation Sans',sans-serif">Perspective</div>
<div class="t" style="left:851px;top:3px;letter-spacing:-0.3px">Cut properties</div>
<div class="t" style="left:856px;top:19px;letter-spacing:-0.3px">Preprocess</div>
<div class="t" style="left:918px;top:39px">Type:</div>
<div class="abs" style="left:949px;top:37px;width:141px;height:18px;background:#2a2a2a;border:1px solid #222"></div>
<div class="abs" style="left:1073px;top:38px;width:16px;height:16px;background:#383838;border:1px solid #2a2a2a"></div>
<svg class="abs" style="left:1076px;top:42px" width="10" height="6"><path d="M0.5,0.5 H9.5 L5,5.5 Z" fill="#c0c0c0"/></svg>
<div class="t" style="left:955px;top:40px;color:#d0d0d0">Sew</div>
<div class="t" style="left:852px;top:63px;letter-spacing:-0.12px">Welding Tolerance:</div>
<div class="abs" style="left:949px;top:61px;width:90px;height:18px;background:#333;border:1px solid #242424"></div>
<div class="t" style="left:952px;top:64px;color:#6a6a6a">0</div>
<div class="abs" style="left:1041px;top:61px;width:49px;height:18px;background:#333;border:1px solid #242424"></div>
<div class="abs" style="left:1074px;top:62px;width:15px;height:16px;background:#383838;border:1px solid #2a2a2a"></div>
<svg class="abs" style="left:1076px;top:66px" width="10" height="6"><path d="M0.5,0.5 H9.5 L5,5.5 Z" fill="#2a2a2a"/></svg>
<div class="t" style="left:1045px;top:64px;color:#6a6a6a">mm</div>
<div class="abs" style="left:1012px;top:85px;width:79px;height:22px;background:#383838;border:1px solid #242424;border-top-color:#444;border-left-color:#444"></div>
<div class="abs" style="left:1015px;top:88px;width:73px;height:16px;border:1px dotted #d8d8d8"></div>
<div class="t" style="left:1012px;top:90px;width:79px;text-align:center;color:#c8c8c8">Apply</div>
<div class="t" style="left:855px;top:116px">Cut points</div>
<div class="t" style="left:852px;top:133px;letter-spacing:-0.05px">4&nbsp; defined cut points.</div>
<div class="abs" style="left:981px;top:145px;width:110px;height:22px;background:#383838;border:1px solid #242424;border-top-color:#444;border-left-color:#444"></div>
<div class="t" style="left:981px;top:149px;width:110px;text-align:center;color:#c8c8c8">Cut!</div>
</body></html>
